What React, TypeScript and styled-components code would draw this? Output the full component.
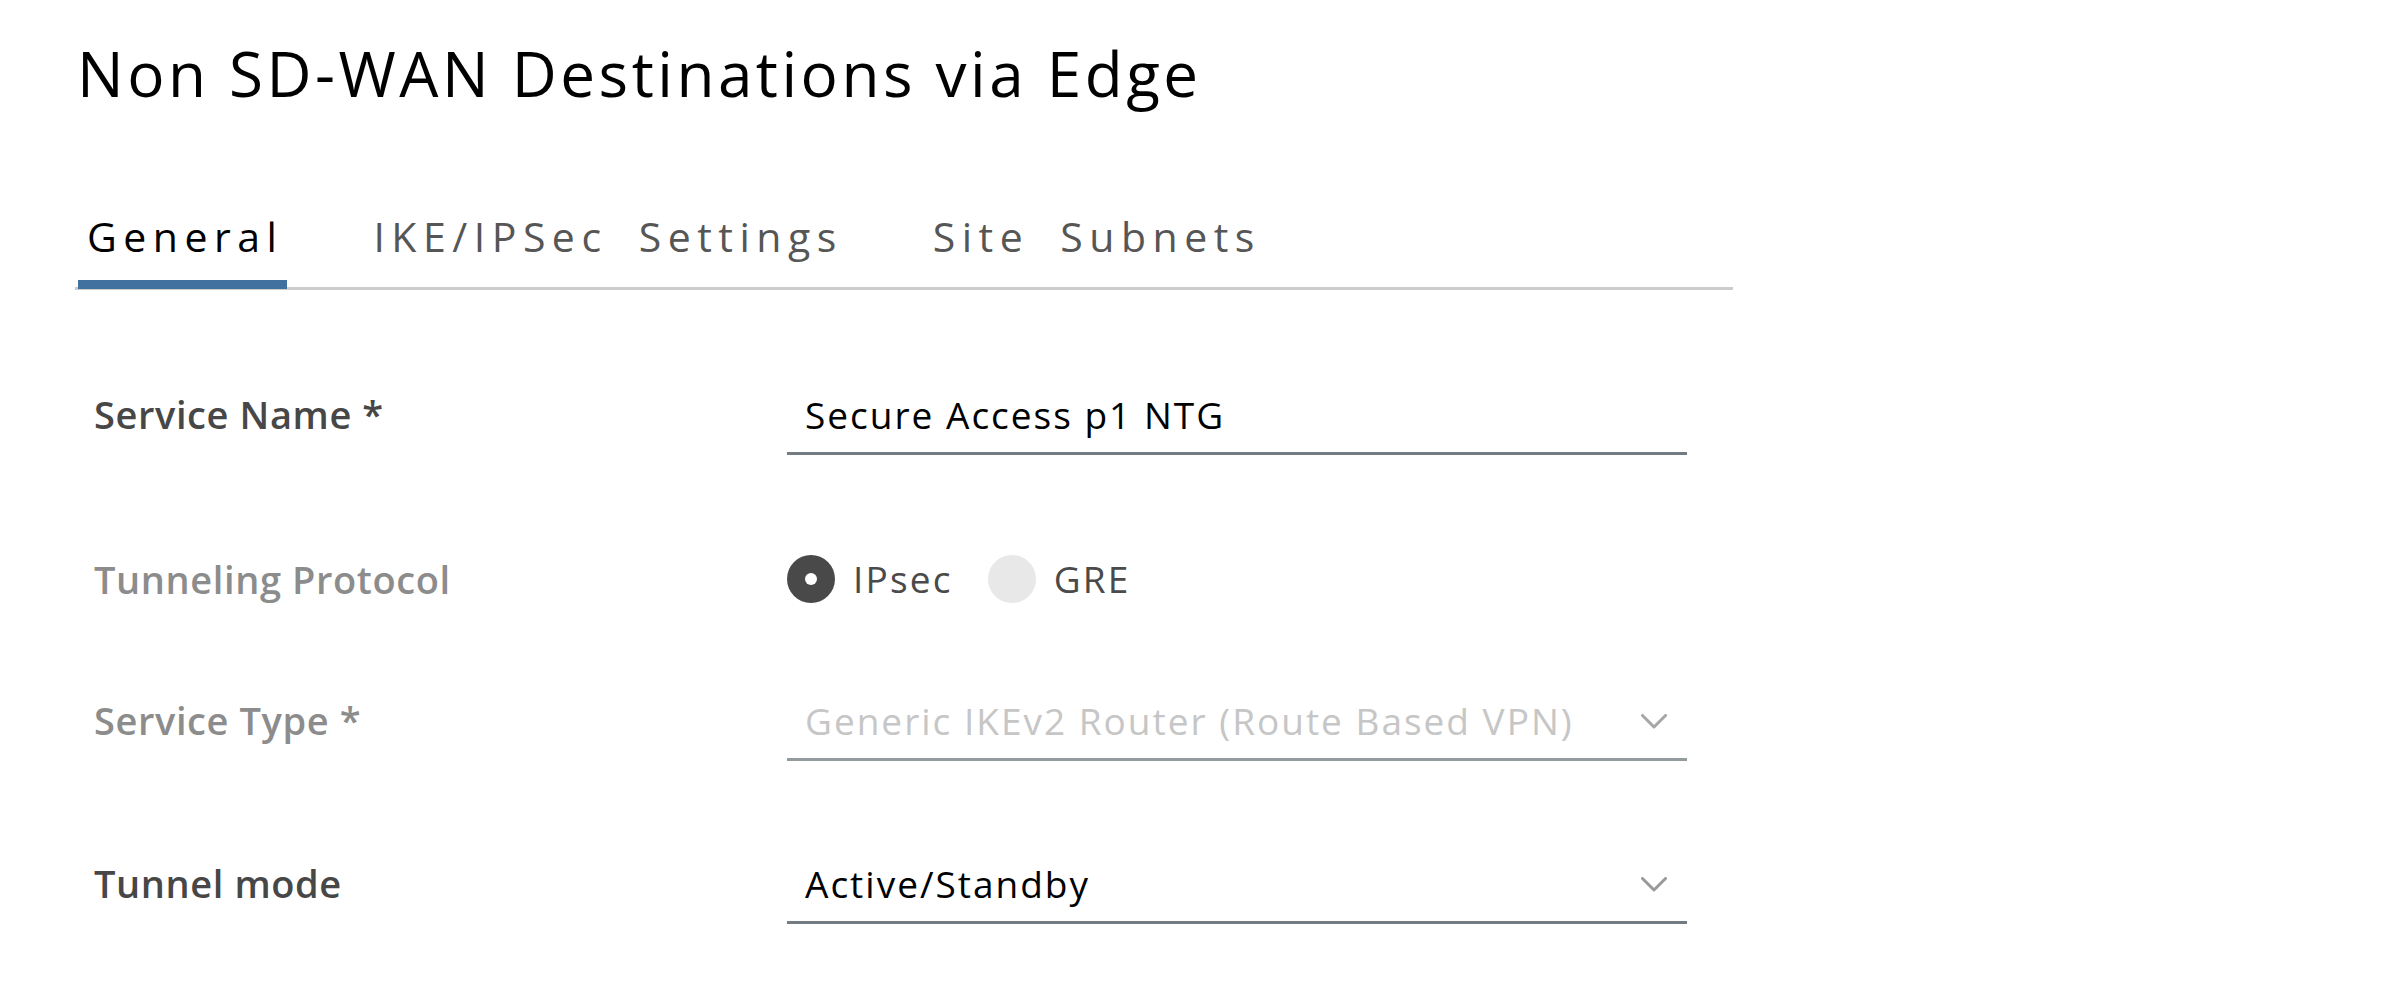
import React from "react";
import styled, { createGlobalStyle } from "styled-components";

const GlobalStyle = createGlobalStyle`
  html, body {
    margin: 0;
    padding: 0;
    background: #ffffff;
  }
  body {
    font-family: "Open Sans", Lato, Arial, sans-serif;
  }
  * { box-sizing: border-box; }
`;

const Page = styled.div`
  width: 2400px;
  min-height: 984px;
  padding: 36px 0 0 0;
  display: flex;
  flex-direction: column;
  font-family: "Open Sans", Lato, Arial, sans-serif;
`;

const Title = styled.h1`
  margin: 0 0 0 77px;
  font-size: 62px;
  line-height: 74px;
  font-weight: 400;
  color: #000000;
  letter-spacing: 3.5px;
`;

const TabBar = styled.nav`
  margin: 102px 0 0 75px;
  width: 1658px;
  display: flex;
  align-items: flex-end;
  gap: 77px;
  border-bottom: 3px solid #cccccc;
`;

const Tab = styled.button<{ $active?: boolean }>`
  appearance: none;
  background: none;
  border: none;
  border-bottom: 9px solid ${(p) => (p.$active ? "#41729f" : "transparent")};
  margin: 0 0 -2px 0;
  padding: 0 4px 19px 9px;
  font-family: inherit;
  font-size: 41px;
  line-height: 49px;
  font-weight: 400;
  letter-spacing: 6.5px;
  word-spacing: 14px;
  color: ${(p) => (p.$active ? "#000000" : "#565656")};
  cursor: pointer;
  &:first-child { margin-left: 3px; }
`;

const Form = styled.div`
  margin: 102px 0 0 94px;
  display: flex;
  flex-direction: column;
`;

const Row = styled.div<{ $spaceBefore?: number }>`
  display: grid;
  grid-template-columns: 693px 900px;
  align-items: baseline;
  margin-top: ${(p) => p.$spaceBefore ?? 0}px;
`;

const RadioRowWrap = styled(Row)`
  align-items: center;
`;

const Label = styled.label<{ $muted?: boolean }>`
  font-size: 38px;
  line-height: 45px;
  font-weight: 600;
  letter-spacing: 0.6px;
  color: ${(p) => (p.$muted ? "#8c8c8c" : "#474747")};
`;

const Field = styled.div<{ $disabled?: boolean }>`
  display: flex;
  align-items: center;
  justify-content: space-between;
  padding: 0 20px 15px 18px;
  border-bottom: 3px solid ${(p) => (p.$disabled ? "#949b9f" : "#737c82")};
  font-size: 37px;
  line-height: 44px;
  letter-spacing: 2px;
  color: ${(p) => (p.$disabled ? "#c6c6c6" : "#000000")};
`;

const Chevron = styled.svg<{ $disabled?: boolean }>`
  width: 26px;
  height: 15px;
  flex: none;
  color: ${(p) => (p.$disabled ? "#a6a6a6" : "#9a9a9a")};
`;

const RadioGroup = styled.div`
  display: flex;
  align-items: center;
  height: 48px;
`;

const RadioOption = styled.div`
  display: flex;
  align-items: center;
  gap: 18px;
  margin-right: 35px;
`;

const RadioCircle = styled.span<{ $checked?: boolean }>`
  width: 48px;
  height: 48px;
  border-radius: 50%;
  background: ${(p) => (p.$checked ? "#494949" : "#e8e8e8")};
  display: flex;
  align-items: center;
  justify-content: center;
  &::after {
    content: "";
    display: ${(p) => (p.$checked ? "block" : "none")};
    width: 12px;
    height: 12px;
    border-radius: 50%;
    background: #ffffff;
  }
`;

const RadioText = styled.span`
  font-size: 37px;
  line-height: 44px;
  letter-spacing: 2.2px;
  color: #4a4a4a;
`;

const ChevronIcon = ({ disabled }: { disabled?: boolean }) => (
  <Chevron $disabled={disabled} viewBox="0 0 26 15" fill="none">
    <path d="M1.5 1.5 L13 13 L24.5 1.5" stroke="currentColor" strokeWidth="3" strokeLinecap="round" strokeLinejoin="round" />
  </Chevron>
);

export default function App() {
  return (
    <>
      <GlobalStyle />
      <Page>
        <Title>Non SD-WAN Destinations via Edge</Title>
        <TabBar>
          <Tab $active>General</Tab>
          <Tab>IKE/IPSec Settings</Tab>
          <Tab>Site Subnets</Tab>
        </TabBar>
        <Form>
          <Row>
            <Label>Service Name *</Label>
            <Field>Secure Access p1 NTG</Field>
          </Row>
          <RadioRowWrap $spaceBefore={100}>
            <Label $muted>Tunneling Protocol</Label>
            <RadioGroup>
              <RadioOption>
                <RadioCircle $checked />
                <RadioText>IPsec</RadioText>
              </RadioOption>
              <RadioOption>
                <RadioCircle />
                <RadioText>GRE</RadioText>
              </RadioOption>
            </RadioGroup>
          </RadioRowWrap>
          <Row $spaceBefore={95}>
            <Label $muted>Service Type *</Label>
            <Field $disabled>
              <span>Generic IKEv2 Router (Route Based VPN)</span>
              <ChevronIcon disabled />
            </Field>
          </Row>
          <Row $spaceBefore={100}>
            <Label>Tunnel mode</Label>
            <Field>
              <span>Active/Standby</span>
              <ChevronIcon />
            </Field>
          </Row>
        </Form>
      </Page>
    </>
  );
}
